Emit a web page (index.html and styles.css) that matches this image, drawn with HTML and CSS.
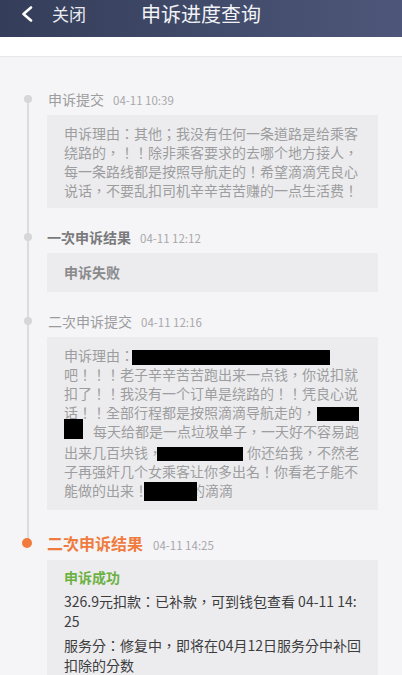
FILE: index.html
```html
<!DOCTYPE html>
<html lang="zh-CN">
<head>
<meta charset="utf-8">
<title>申诉进度查询</title>
<link rel="stylesheet" href="styles.css">
</head>
<body>
<header class="topbar">
  <svg class="back" width="12" height="16" viewBox="0 0 12 16"><polyline points="10,1.5 2.5,8 10,14.5" fill="none" stroke="#ffffff" stroke-width="2.6" stroke-linecap="round" stroke-linejoin="round"/></svg>
  <span class="close">关闭</span>
  <span class="title">申诉进度查询</span>
</header>
<div class="subbar"></div>
<main class="timeline">
  <section class="item">
    <div class="head"><span class="dot"></span><span class="name">申诉提交</span><span class="time">04-11 10:39</span></div>
    <div class="box">申诉理由：其他；我没有任何一条道路是给乘客绕路的，！！除非乘客要求的去哪个地方接人，每一条路线都是按照导航走的！希望滴滴凭良心说话，不要乱扣司机辛辛苦苦赚的一点生活费！</div>
  </section>
  <section class="item">
    <div class="head"><span class="dot"></span><span class="name strong">一次申诉结果</span><span class="time">04-11 12:12</span></div>
    <div class="box single"><b class="fail">申诉失败</b></div>
  </section>
  <section class="item gap-last">
    <div class="head"><span class="dot"></span><span class="name">二次申诉提交</span><span class="time">04-11 12:16</span></div>
    <div class="box">申诉理由：<span class="redact r1"></span><br>吧！！！老子辛辛苦苦跑出来一点钱，你说扣就<br>扣了！！我没有一个订单是绕路的！！凭良心说<br>话！！全部行程都是按照滴滴导航走的，<span class="redact r2"></span><br><span class="redact r3"></span>每天给都是一点垃圾单子，一天好不容易跑<br>出来几百块钱，<span class="redact r4"></span>你还给我，不然老<br>子再强奸几个女乘客让你多出名！你看老子能不<br>能做的出来！<span class="redact r5"></span>的滴滴</div>
  </section>
  <section class="item current">
    <div class="head"><span class="dot"></span><span class="name big">二次申诉结果</span><span class="time">04-11 14:25</span></div>
    <div class="box result">
      <div class="ok">申诉成功</div>
      <p class="line">326.9元扣款：已补款，可到钱包查看 04-11 14:<br>25</p>
      <p class="line">服务分：修复中，即将在04月12日服务分中补回扣除的分数</p>
    </div>
  </section>
</main>
</body>
</html>
```
FILE: styles.css
```css
html, body {
  margin: 0;
  padding: 0;
}
body {
  width: 402px;
  height: 675px;
  overflow: hidden;
  background: #f5f5f7;
  font-family: "Noto Sans CJK TC", "Noto Sans CJK SC", "Noto Sans", sans-serif;
  font-feature-settings: "locl" 0;
}
.topbar {
  height: 37px;
  box-sizing: border-box;
  padding: 2px 0 11px 21px;
  display: flex;
  align-items: center;
  background: linear-gradient(90deg, #343d59 0%, #404a69 50%, #4e5779 100%);
}
.back {
  display: block;
  flex: none;
}
.close {
  margin-left: 19px;
  font-size: 17px;
  line-height: 22px;
  color: #e9eaf0;
}
.title {
  margin-left: 55px;
  font-size: 20px;
  line-height: 24px;
  color: #f1f2f6;
}
.subbar {
  height: 19px;
  background: #ffffff;
  border-bottom: 1px solid #e7e7eb;
}
.timeline {
  padding: 32px 24px 0 47px;
}
.item {
  position: relative;
  padding-bottom: 19px;
}
.item.gap-last {
  padding-bottom: 22px;
}
.item:not(.current)::after {
  content: "";
  position: absolute;
  left: -20px;
  top: 10px;
  bottom: -10px;
  width: 2px;
  background: #dcdcde;
}
.head {
  position: relative;
  display: flex;
  align-items: baseline;
  height: 20px;
  line-height: 20px;
  margin-bottom: 6px;
}
.dot {
  position: absolute;
  left: -23px;
  top: 6px;
  width: 8px;
  height: 8px;
  border-radius: 50%;
  background: #d6d6d8;
  z-index: 1;
}
.name {
  font-size: 14px;
  color: #9c9c9e;
  margin-left: 1px;
}
.name.strong {
  font-weight: 700;
  color: #7a7a7c;
  margin-left: 0;
}
.time {
  margin-left: 9px;
  font-size: 11.5px;
  color: #a8a8aa;
}
.current .head {
  height: 22px;
  line-height: 22px;
}
.current .dot {
  left: -25px;
  top: 6px;
  width: 10px;
  height: 10px;
  background: #f07b3c;
}
.name.big {
  font-size: 16px;
  font-weight: 700;
  color: #ef7b3e;
  margin-left: 0;
}
.current .time {
  margin-left: 10px;
}
.box {
  background: #ececee;
  padding: 9px 10px 8px 17px;
  font-size: 14px;
  line-height: 19px;
  color: #9d9d9f;
}
.box.single {
  padding: 10px 10px 10px 17px;
}
.fail {
  font-weight: 700;
  color: #8a8a8c;
}
.redact {
  display: inline-block;
  background: #000000;
  vertical-align: middle;
  position: relative;
  z-index: 1;
}
.r1 {
  width: 198px;
  height: 15px;
  margin-left: -2px;
}
.r2 {
  width: 42px;
  height: 14px;
  margin-left: 1px;
}
.r3 {
  width: 19px;
  height: 20px;
  margin-right: 10px;
  top: -4px;
}
.r4 {
  width: 86px;
  height: 14px;
  margin-left: -5px;
  margin-right: 4px;
}
.r5 {
  width: 53px;
  height: 19px;
  margin-left: -4px;
  margin-right: -6px;
  top: -1px;
}
.box.result {
  padding: 8px 10px 20px 17px;
  color: #3c3c3e;
}
.ok {
  color: #6cb143;
  font-weight: 700;
  line-height: 19px;
}
.line {
  margin: 4px 0 0;
  line-height: 20px;
}
```
